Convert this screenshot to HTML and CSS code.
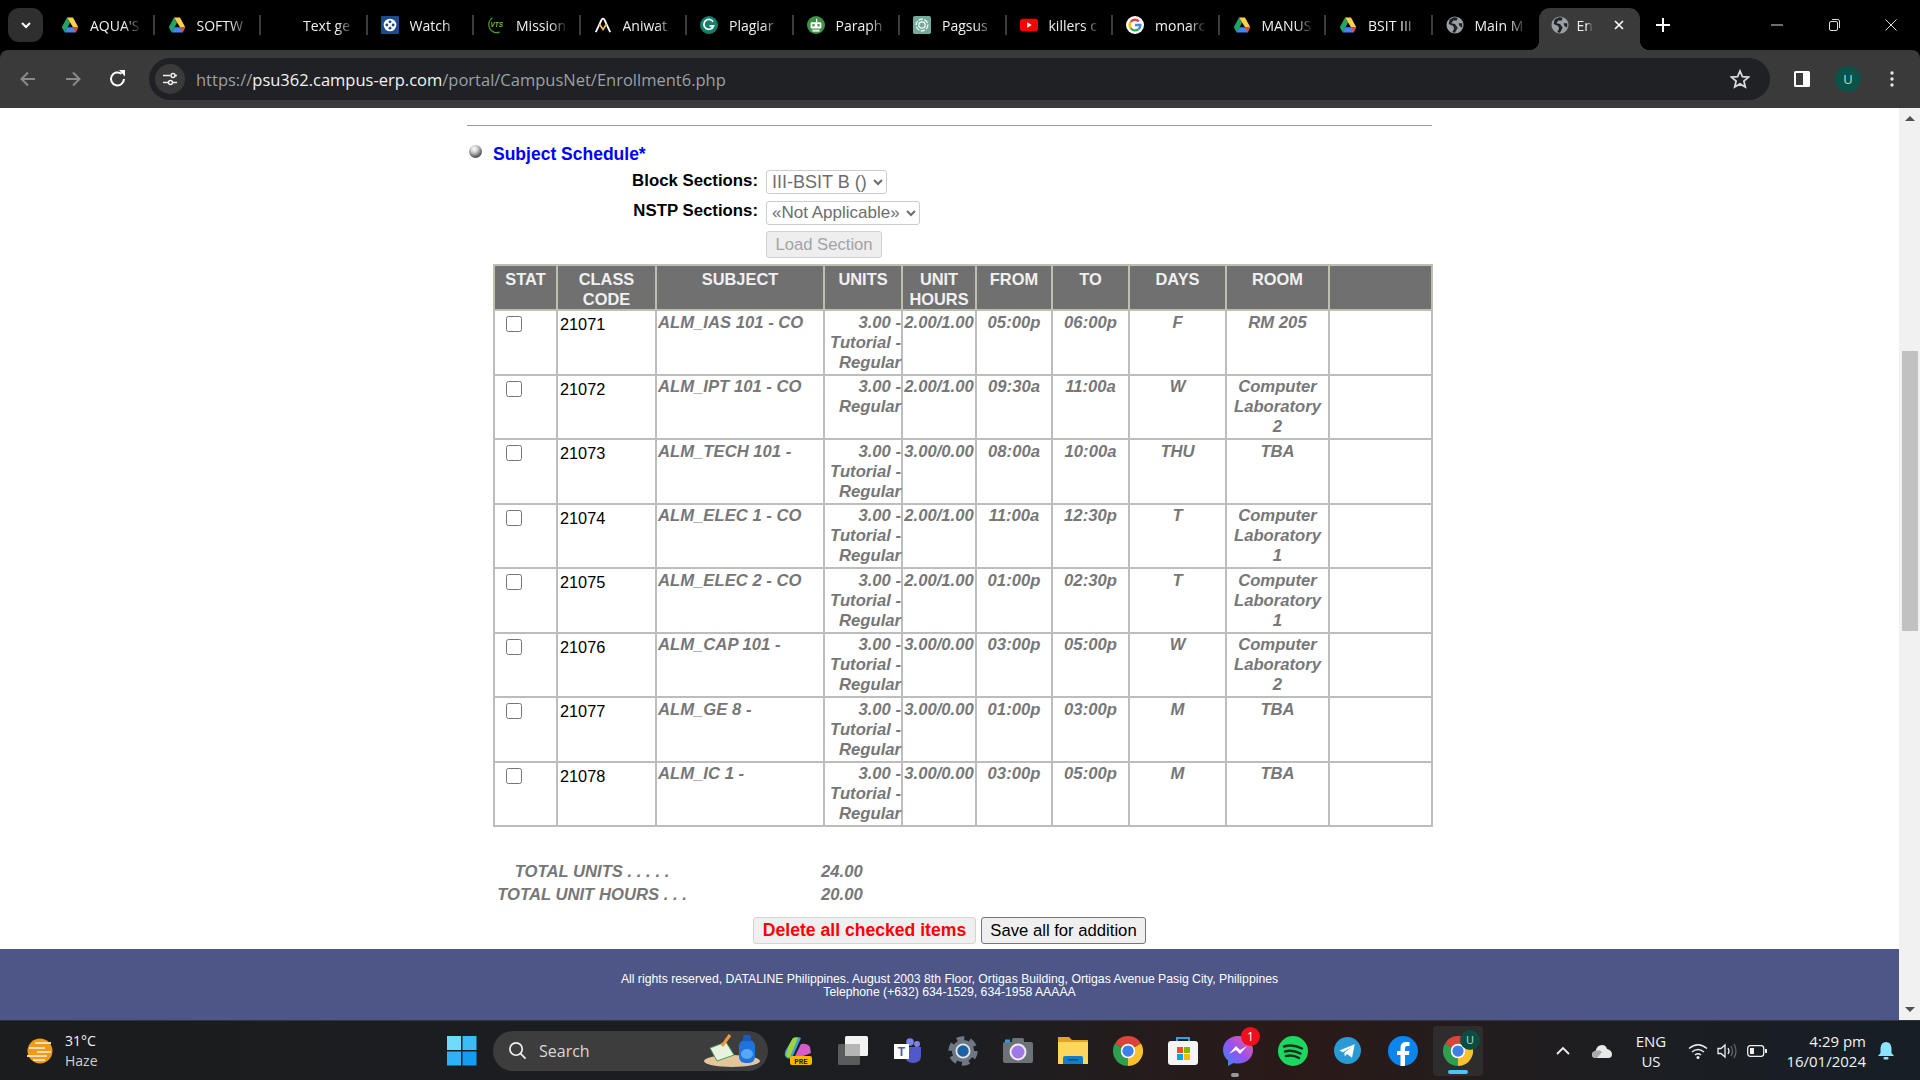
FILE: index.html
```html
<!DOCTYPE html>
<html lang="en">
<head>
	<meta charset="UTF-8">
	<title>Enrollment</title>
	<link rel="stylesheet" href="styles.css">
</head>
<body>
	<svg class="defs" width="0" height="0">
		<symbol id="drive" viewBox="0 0 24 22">
			<polygon points="8,1 12,8 5,21 1,14" fill="#1fa463"/>
			<polygon points="8,1 16,1 23,14 16,14" fill="#ffd04b"/>
			<polygon points="5,21 8.5,14 23,14 19.5,21" fill="#4285f4"/>
			<polygon points="16,14 23,14 19.5,21" fill="#ea4335"/>
		</symbol>
		<symbol id="reel" viewBox="0 0 20 20">
			<rect width="20" height="20" rx="1" fill="#1d4a8f"/>
			<circle cx="10" cy="10" r="7" fill="#fff"/>
			<circle cx="10" cy="6.5" r="1.6" fill="#1d4a8f"/>
			<circle cx="10" cy="13.5" r="1.6" fill="#1d4a8f"/>
			<circle cx="6.5" cy="10" r="1.6" fill="#1d4a8f"/>
			<circle cx="13.5" cy="10" r="1.6" fill="#1d4a8f"/>
		</symbol>
		<symbol id="ani" viewBox="0 0 20 20">
			<path d="M2 18L8 5Q10 1 12 5L18 18" fill="none" stroke="#fff" stroke-width="2"/>
			<path d="M6 9L10 15L14 9" fill="none" stroke="#e6b765" stroke-width="2"/>
		</symbol>
		<symbol id="gram" viewBox="0 0 20 20">
			<circle cx="10" cy="10" r="10" fill="#11806a"/>
			<path d="M14.500 6.500A5.500 5.500 0 1 0 15 11H10.500" fill="none" stroke="#fff" stroke-width="2"/>
		</symbol>
		<symbol id="robot" viewBox="0 0 20 20">
			<circle cx="10" cy="10" r="10" fill="#3f9149"/>
			<rect x="4" y="7" width="12" height="7" rx="1.500" fill="#fff"/>
			<rect x="6" y="9" width="2.500" height="2.500" fill="#3f9149"/>
			<rect x="11.500" y="9" width="2.500" height="2.500" fill="#3f9149"/>
			<rect x="6" y="15" width="8" height="2.500" fill="#d9ead9"/>
			<rect x="10" y="3" width="1.400" height="4" fill="#fff"/>
		</symbol>
		<symbol id="gpt" viewBox="0 0 20 20">
			<rect width="20" height="20" rx="2" fill="#74aa9c"/>
			<circle cx="10" cy="10" r="6.500" fill="none" stroke="#fff" stroke-width="1.300" stroke-dasharray="5 1.500"/>
			<circle cx="10" cy="10" r="3.500" fill="none" stroke="#fff" stroke-width="1.300"/>
		</symbol>
		<symbol id="yt" viewBox="0 0 20 14">
			<rect width="20" height="14" rx="3.500" fill="#f00"/>
			<polygon points="8,4 13,7 8,10" fill="#fff"/>
		</symbol>
		<symbol id="goog" viewBox="0 0 20 20">
			<circle cx="10" cy="10" r="10" fill="#fff"/>
			<path d="M14.200 6A6 6 0 0 0 5.200 6.500" fill="none" stroke="#ea4335" stroke-width="2.600"/>
			<path d="M5.200 6.500A6 6 0 0 0 5.200 13.500" fill="none" stroke="#fbbc05" stroke-width="2.600"/>
			<path d="M5.200 13.500A6 6 0 0 0 14 14.500" fill="none" stroke="#34a853" stroke-width="2.600"/>
			<path d="M14 14.500A6 6 0 0 0 16 10H10" fill="none" stroke="#4285f4" stroke-width="2.600"/>
		</symbol>
		<symbol id="globe" viewBox="0 0 20 20">
			<circle cx="10" cy="10" r="9.500" fill="#9aa0a6"/>
			<path d="M9 1.500L4 4L3 9L8 11L9 14L7 18L10 18.500L13 13L10 9L6 8L8 5L12 5L13 2Z" fill="#202124"/>
			<path d="M14 8L18 8L18 13L15 11Z" fill="#202124"/>
		</symbol>
		<symbol id="chrome" viewBox="0 0 24 24">
			<path d="M12 12L1.600 6A12 12 0 0 1 22.400 6Z" fill="#db4437"/>
			<path d="M12 12L22.400 6A12 12 0 0 1 12 24Z" fill="#fbc02d"/>
			<path d="M12 12L12 24A12 12 0 0 1 1.600 6Z" fill="#2e9e4f"/>
			<circle cx="12" cy="12" r="5.800" fill="#fff"/>
			<circle cx="12" cy="12" r="4.500" fill="#3f7fe8"/>
		</symbol>
	</svg>

	<div class="tabstrip">
		<div class="tab_menu">
			<svg class="ico_12" viewBox="0 0 12 12"><path d="M2 4L6 8L10 4" fill="none" stroke="#fff" stroke-width="2"/></svg>
		</div>
		<div class="tab"><svg class="favicon"><use href="#drive"/></svg><span class="tab_title">AQUA'S</span></div>
		<div class="tab"><svg class="favicon"><use href="#drive"/></svg><span class="tab_title">SOFTW</span></div>
		<div class="tab"><span class="favicon"></span><span class="tab_title">Text ge</span></div>
		<div class="tab"><svg class="favicon"><use href="#reel"/></svg><span class="tab_title">Watch</span></div>
		<div class="tab">
			<svg class="favicon" viewBox="0 0 20 20">
				<path d="M6 2A9 9 0 0 0 14 18" fill="none" stroke="#4f9a22" stroke-width="1.400"/>
				<text x="4" y="12.500" class="vts_text">VTS</text>
			</svg>
			<span class="tab_title">Mission</span>
		</div>
		<div class="tab"><svg class="favicon"><use href="#ani"/></svg><span class="tab_title">Aniwat</span></div>
		<div class="tab"><svg class="favicon"><use href="#gram"/></svg><span class="tab_title">Plagiar</span></div>
		<div class="tab"><svg class="favicon"><use href="#robot"/></svg><span class="tab_title">Paraph</span></div>
		<div class="tab"><svg class="favicon"><use href="#gpt"/></svg><span class="tab_title">Pagsus</span></div>
		<div class="tab"><svg class="favicon"><use href="#yt"/></svg><span class="tab_title">killers c</span></div>
		<div class="tab"><svg class="favicon"><use href="#goog"/></svg><span class="tab_title">monarc</span></div>
		<div class="tab"><svg class="favicon"><use href="#drive"/></svg><span class="tab_title">MANUS</span></div>
		<div class="tab"><svg class="favicon"><use href="#drive"/></svg><span class="tab_title">BSIT III</span></div>
		<div class="tab tab_last"><svg class="favicon"><use href="#globe"/></svg><span class="tab_title">Main M</span></div>
		<div class="tab_active">
			<svg class="favicon"><use href="#globe"/></svg>
			<span class="tab_title_short">En</span>
			<svg class="ico_12" viewBox="0 0 12 12"><path d="M2 2L10 10M10 2L2 10" stroke="#fff" stroke-width="1.600"/></svg>
		</div>
		<svg class="tab_plus" viewBox="0 0 14 14"><path d="M7 0V14M0 7H14" stroke="#fff" stroke-width="2"/></svg>
		<div class="win_controls">
			<svg class="ico_12" viewBox="0 0 12 12"><path d="M0 6H12" stroke="#ddd" stroke-width="1"/></svg>
			<svg class="ico_12" viewBox="0 0 12 12"><rect x="1.500" y="2.500" width="8" height="9" rx="1.500" fill="none" stroke="#ddd"/><path d="M4 0.500H9A2 2 0 0 1 11.500 3V9" fill="none" stroke="#ddd"/></svg>
			<svg class="ico_12" viewBox="0 0 12 12"><path d="M0.500 0.500L11.500 11.500M11.500 0.500L0.500 11.500" stroke="#ddd"/></svg>
		</div>
	</div>

	<div class="toolbar">
		<svg class="nav_btn" viewBox="0 0 20 20"><path d="M17 10H4M10 3.500L3.500 10L10 16.500" fill="none" stroke="#8a8a8a" stroke-width="2"/></svg>
		<svg class="nav_btn" viewBox="0 0 20 20"><path d="M3 10H16M10 3.500L16.500 10L10 16.500" fill="none" stroke="#8a8a8a" stroke-width="2"/></svg>
		<svg class="nav_btn" viewBox="0 0 20 20"><path d="M16 10A6.500 6.500 0 1 1 13.500 4.800" fill="none" stroke="#fff" stroke-width="2"/><polygon points="11,1 17,1 17,7.500" fill="#fff"/></svg>
		<div class="address">
			<div class="site_info">
				<svg class="ico_16" viewBox="0 0 16 16"><path d="M1 4.500H8M1 11.500H6M13 4.500H15M11 11.500H15" stroke="#eee" stroke-width="1.600"/><circle cx="11" cy="4.500" r="2" fill="none" stroke="#eee" stroke-width="1.500"/><circle cx="8.500" cy="11.500" r="2" fill="none" stroke="#eee" stroke-width="1.500"/></svg>
			</div>
			<span class="url">https://<b>psu362.campus-erp.com</b>/portal/CampusNet/Enrollment6.php</span>
			<svg class="star" viewBox="0 0 20 20"><polygon points="10,2 12.400,7.600 18.500,8.100 13.900,12.100 15.300,18 10,14.900 4.700,18 6.100,12.100 1.500,8.100 7.600,7.600" fill="none" stroke="#d8d8d8" stroke-width="1.800"/></svg>
		</div>
		<svg class="side_panel" viewBox="0 0 18 18"><rect x="1" y="1" width="16" height="16" rx="1.500" fill="#fff"/><rect x="3" y="3" width="7" height="12" fill="#3a3a3a"/></svg>
		<div class="avatar">U</div>
		<svg class="kebab" viewBox="0 0 4 18"><circle cx="2" cy="3" r="1.700" fill="#e8e8e8"/><circle cx="2" cy="9" r="1.700" fill="#e8e8e8"/><circle cx="2" cy="15" r="1.700" fill="#e8e8e8"/></svg>
	</div>

	<div class="viewport">
		<div class="page">
			<div class="content">
				<div class="rule"></div>
				<div class="section_head">
					<span class="ball"></span>
					<span class="section_title">Subject Schedule*</span>
				</div>
				<div class="form_grid">
					<label class="form_label">Block Sections:</label>
					<select class="sel sel_block"><option>III-BSIT B ()</option></select>
					<label class="form_label">NSTP Sections:</label>
					<select class="sel sel_nstp"><option>«Not Applicable»</option></select>
					<span></span>
					<button class="btn_load" disabled>Load Section</button>
				</div>

				<table class="sched">
					<colgroup>
						<col class="c_stat"><col class="c_code"><col class="c_subj"><col class="c_units"><col class="c_hours">
						<col class="c_from"><col class="c_to"><col class="c_days"><col class="c_room"><col class="c_blank">
					</colgroup>
					<tr class="head">
						<th>STAT</th><th>CLASS<br>CODE</th><th>SUBJECT</th><th>UNITS</th><th>UNIT<br>HOURS</th>
						<th>FROM</th><th>TO</th><th>DAYS</th><th>ROOM</th><th></th>
					</tr>
					<tr>
						<td class="stat"><input type="checkbox"></td><td class="code">21071</td><td class="subj">ALM_IAS 101 - CO</td>
						<td class="units">3.00 -<br>Tutorial -<br>Regular</td><td class="hours">2.00/1.00</td>
						<td>05:00p</td><td>06:00p</td><td>F</td><td>RM 205</td><td></td>
					</tr>
					<tr>
						<td class="stat"><input type="checkbox"></td><td class="code">21072</td><td class="subj">ALM_IPT 101 - CO</td>
						<td class="units">3.00 -<br>Regular</td><td class="hours">2.00/1.00</td>
						<td>09:30a</td><td>11:00a</td><td>W</td><td>Computer<br>Laboratory<br>2</td><td></td>
					</tr>
					<tr>
						<td class="stat"><input type="checkbox"></td><td class="code">21073</td><td class="subj">ALM_TECH 101 -</td>
						<td class="units">3.00 -<br>Tutorial -<br>Regular</td><td class="hours">3.00/0.00</td>
						<td>08:00a</td><td>10:00a</td><td>THU</td><td>TBA</td><td></td>
					</tr>
					<tr>
						<td class="stat"><input type="checkbox"></td><td class="code">21074</td><td class="subj">ALM_ELEC 1 - CO</td>
						<td class="units">3.00 -<br>Tutorial -<br>Regular</td><td class="hours">2.00/1.00</td>
						<td>11:00a</td><td>12:30p</td><td>T</td><td>Computer<br>Laboratory<br>1</td><td></td>
					</tr>
					<tr>
						<td class="stat"><input type="checkbox"></td><td class="code">21075</td><td class="subj">ALM_ELEC 2 - CO</td>
						<td class="units">3.00 -<br>Tutorial -<br>Regular</td><td class="hours">2.00/1.00</td>
						<td>01:00p</td><td>02:30p</td><td>T</td><td>Computer<br>Laboratory<br>1</td><td></td>
					</tr>
					<tr>
						<td class="stat"><input type="checkbox"></td><td class="code">21076</td><td class="subj">ALM_CAP 101 -</td>
						<td class="units">3.00 -<br>Tutorial -<br>Regular</td><td class="hours">3.00/0.00</td>
						<td>03:00p</td><td>05:00p</td><td>W</td><td>Computer<br>Laboratory<br>2</td><td></td>
					</tr>
					<tr>
						<td class="stat"><input type="checkbox"></td><td class="code">21077</td><td class="subj">ALM_GE 8 -</td>
						<td class="units">3.00 -<br>Tutorial -<br>Regular</td><td class="hours">3.00/0.00</td>
						<td>01:00p</td><td>03:00p</td><td>M</td><td>TBA</td><td></td>
					</tr>
					<tr>
						<td class="stat"><input type="checkbox"></td><td class="code">21078</td><td class="subj">ALM_IC 1 -</td>
						<td class="units">3.00 -<br>Tutorial -<br>Regular</td><td class="hours">3.00/0.00</td>
						<td>03:00p</td><td>05:00p</td><td>M</td><td>TBA</td><td></td>
					</tr>
				</table>

				<div class="totals">
					<span class="total_name">TOTAL UNITS . . . . .</span><span>24.00</span>
					<span class="total_name">TOTAL UNIT HOURS . . .</span><span>20.00</span>
				</div>
				<div class="actions">
					<button class="btn_delete">Delete all checked items</button>
					<button class="btn_save">Save all for addition</button>
				</div>
			</div>
			<div class="footer">
				All rights reserved, DATALINE Philippines. August 2003 8th Floor, Ortigas Building, Ortigas Avenue Pasig City, Philippines<br>
				Telephone (+632) 634-1529, 634-1958 AAAAA
			</div>
		</div>
		<div class="scrollbar">
			<div class="sb_btn"><span class="sb_up"></span></div>
			<div class="sb_thumb"></div>
			<div class="sb_btn sb_bottom"><span class="sb_down"></span></div>
		</div>
	</div>

	<div class="taskbar">
		<div class="weather">
			<svg class="weather_icon" viewBox="0 0 30 30">
				<circle cx="15" cy="15" r="12.500" fill="#f49a12"/>
				<path d="M10 7H26M4 12H20M12 16H26M2 20H22M8 24H20" stroke="#eeddb8" stroke-width="2"/>
			</svg>
			<div class="weather_text"><span>31°C</span><span class="haze">Haze</span></div>
		</div>
		<svg class="start" viewBox="0 0 30 30">
			<rect width="14" height="14" fill="#6fdcff"/><rect x="15.500" width="14" height="14" fill="#3bbcf5"/>
			<rect y="15.500" width="14" height="14" fill="#2cb3f5"/><rect x="15.500" y="15.500" width="14" height="14" fill="#129df0"/>
		</svg>
		<div class="search">
			<svg class="search_icon" viewBox="0 0 20 20"><circle cx="8.500" cy="8.500" r="6.500" fill="none" stroke="#eee" stroke-width="1.800"/><path d="M13 13L18.500 18.500" stroke="#eee" stroke-width="1.800"/></svg>
			<span class="search_text">Search</span>
			<svg class="search_art" viewBox="0 0 60 34">
				<ellipse cx="30" cy="27" rx="28" ry="6" fill="#e3c79a"/>
				<polygon points="8,14 24,8 32,21 15,27" fill="#e8f3df" stroke="#4c9c5a"/>
				<path d="M20 12L28 1" stroke="#f09a3e" stroke-width="3"/>
				<rect x="37" y="6" width="16" height="23" rx="6" fill="#1f73e0"/>
				<rect x="41" y="1" width="8" height="6" rx="2" fill="#185bb8"/>
				<ellipse cx="45" cy="20" rx="6" ry="5" fill="#5aa8f5"/>
			</svg>
		</div>
		<div class="apps">
			<div class="app">
				<svg class="app_icon" viewBox="0 0 30 30">
					<path d="M10 2Q14 0 18 2L9 22Q4 24 2 20Q1 16 4 12Z" fill="#3d9fe0"/>
					<path d="M10 2Q13 1 15 2L7 21Q4 22 3 19Q4 12 10 2Z" fill="#9ed33c"/>
					<path d="M18 8Q24 7 27 11L28 17L10 24Z" fill="#d85cc8"/>
					<rect x="7" y="20" width="22" height="9" rx="2" fill="#f9b800"/>
					<text x="18" y="27.500" class="pre_text">PRE</text>
				</svg>
			</div>
			<div class="app">
				<svg class="app_icon" viewBox="0 0 30 30">
					<rect x="0" y="8" width="22" height="21" rx="1.500" fill="#5b5b5b"/>
					<rect x="7" y="0" width="23" height="20" rx="1.500" fill="#f2f2f2"/>
					<rect x="7" y="8" width="15" height="12" fill="#b5b5b5"/>
				</svg>
			</div>
			<div class="app">
				<svg class="app_icon" viewBox="0 0 30 30">
					<circle cx="24" cy="8" r="3" fill="#7b83eb"/><circle cx="17" cy="6" r="3.800" fill="#7b83eb"/>
					<path d="M12 11H28V20Q28 27 20 27Q12 27 12 19Z" fill="#5059c9"/>
					<rect x="1" y="8" width="15" height="15" fill="#fff"/>
					<text x="8.500" y="20" class="teams_text">T</text>
				</svg>
			</div>
			<div class="app">
				<svg class="app_icon" viewBox="0 0 30 30">
					<circle cx="15" cy="15" r="11" fill="#6d7882"/>
					<circle cx="15" cy="15" r="12.500" fill="none" stroke="#6d7882" stroke-width="4.500" stroke-dasharray="7.500 5.590"/>
					<circle cx="15" cy="15" r="7.500" fill="#e6e6e6"/>
					<circle cx="15" cy="15" r="5.700" fill="#1a62a8"/>
				</svg>
			</div>
			<div class="app">
				<svg class="app_icon" viewBox="0 0 30 30">
					<rect x="0" y="6" width="30" height="21" rx="2" fill="#6d7278"/>
					<rect x="9" y="2" width="12" height="6" rx="1.500" fill="#6d7278"/>
					<rect x="2" y="3.500" width="5" height="3" fill="#2e9ad6"/>
					<circle cx="15" cy="16" r="8.500" fill="#eee"/>
					<circle cx="15" cy="16" r="6.500" fill="#a079e8"/>
				</svg>
			</div>
			<div class="app">
				<svg class="app_icon" viewBox="0 0 30 30">
					<path d="M0 1H11L14 4H30V28H0Z" fill="#e0a421"/>
					<rect x="0" y="6" width="30" height="22" fill="#fcd75c"/>
					<path d="M5 28V22Q5 20 7 20H23Q25 20 25 22V28Z" fill="#0f7fcb"/>
					<rect x="10" y="23" width="10" height="1.500" fill="#0a4e86"/>
				</svg>
			</div>
			<div class="app"><svg class="app_icon"><use href="#chrome"/></svg></div>
			<div class="app">
				<svg class="app_icon" viewBox="0 0 30 30">
					<path d="M9 7V2H21V7" fill="none" stroke="#25a8e0" stroke-width="2"/>
					<rect x="0" y="5" width="30" height="24" rx="3" fill="#f5f5f5"/>
					<rect x="9" y="11" width="6" height="6" fill="#f25022"/><rect x="16" y="11" width="6" height="6" fill="#7fba00"/>
					<rect x="9" y="18" width="6" height="6" fill="#00a4ef"/><rect x="16" y="18" width="6" height="6" fill="#ffb900"/>
				</svg>
			</div>
			<div class="app">
				<svg class="app_icon" viewBox="0 0 30 30">
					<defs><linearGradient id="msgr" x1="0" y1="1" x2="1" y2="0"><stop offset="0" stop-color="#2b8bf5"/><stop offset=".5" stop-color="#9b50f0"/><stop offset="1" stop-color="#f5608a"/></linearGradient></defs>
					<path d="M15 0C6 0 0 6.500 0 14C0 18.500 2 22 5 24.500V30L10.500 27Q12.500 27.500 15 27.500C24 27.500 30 21.500 30 14C30 6.500 24 0 15 0Z" fill="url(#msgr)"/>
					<path d="M6 18L13 10L17 14L24 10L17 18L13 14Z" fill="#fff"/>
				</svg>
				<span class="badge">1</span>
				<span class="run_dot"></span>
			</div>
			<div class="app">
				<svg class="app_icon" viewBox="0 0 30 30">
					<circle cx="15" cy="15" r="15" fill="#1ed760"/>
					<path d="M6 10.500Q15 8 24 12.500M7 15.500Q15 13.500 22.500 17.500M8 20Q15 18.500 21 22" fill="none" stroke="#18301f" stroke-width="2.500" stroke-linecap="round"/>
				</svg>
			</div>
			<div class="app">
				<svg class="app_icon app_tele" viewBox="0 0 30 30">
					<circle cx="15" cy="15" r="15" fill="#2a9ad6"/>
					<path d="M6 15L23 8L20 23L14.500 19L12 21.500L11.500 17.500L19.500 11L10 17Z" fill="#fff"/>
				</svg>
			</div>
			<div class="app">
				<svg class="app_icon" viewBox="0 0 30 30">
					<circle cx="15" cy="15" r="15" fill="#0c85ee"/>
					<path d="M12.500 30V19H9V15H12.500V11.500Q12.500 6 18 6H21.500V10H19Q17 10 17 12V15H21.500L20.800 19H17V30Z" fill="#fff"/>
				</svg>
			</div>
			<div class="app app_active">
				<svg class="app_icon"><use href="#chrome"/></svg>
				<span class="chrome_badge">U</span>
				<span class="run_bar"></span>
			</div>
		</div>
		<div class="tray">
			<svg class="chevron" viewBox="0 0 16 10"><path d="M2 8L8 2L14 8" fill="none" stroke="#eee" stroke-width="1.800"/></svg>
			<svg class="cloud" viewBox="0 0 20 14"><path d="M4 14Q0 14 0 10.500Q0 7.500 3.500 7Q5 1 10 1Q14 1 15 5Q20 6 20 10.500Q20 14 16 14Z" fill="#e8e8e8"/><path d="M4 14Q0 14 0 10.500Q0 7.500 3.500 7Q7 5 10 8L5 14Z" fill="#aaa"/></svg>
			<div class="lang"><span>ENG</span><span>US</span></div>
			<svg class="wifi" viewBox="0 0 20 16"><path d="M1 5.500Q10 -2 19 5.500M4 9Q10 4 16 9M7 12Q10 9.500 13 12" fill="none" stroke="#eee" stroke-width="1.500"/><circle cx="10" cy="14.500" r="1.500" fill="#eee"/></svg>
			<svg class="speaker" viewBox="0 0 20 16"><path d="M1 5.500H4L8 2V14L4 10.500H1Z" fill="none" stroke="#eee" stroke-width="1.300"/><path d="M11 5Q13 8 11 11" fill="none" stroke="#eee" stroke-width="1.300"/><path d="M14 3Q17 8 14 13M17 1Q21 8 17 15" fill="none" stroke="#666" stroke-width="1.300"/></svg>
			<svg class="battery" viewBox="0 0 20 12"><rect x="0.700" y="0.700" width="16" height="10.600" rx="2.500" fill="none" stroke="#eee" stroke-width="1.300"/><rect x="3" y="3" width="4" height="6" fill="#eee"/><rect x="18" y="4" width="2" height="4" fill="#eee"/></svg>
			<div class="clock"><span>4:29 pm</span><span>16/01/2024</span></div>
			<svg class="bell" viewBox="0 0 16 18"><path d="M8 0Q13 0 13.500 6V11L16 14H0L2.500 11V6Q3 0 8 0Z" fill="#8be3ff"/><rect x="5.500" y="15" width="5" height="2.500" rx="1" fill="#8be3ff"/></svg>
		</div>
	</div>
</body>
</html>
```

FILE: styles.css
```css
*{
	box-sizing:border-box;
}

body{
	margin:0;
	width:1920px;
	height:1080px;
	overflow:hidden;
	display:flex;
	flex-direction:column;
	font-family:"Liberation Sans",Arial,sans-serif;
	background-color:#000;
}

.defs{
	position:absolute;
}

.vts_text{
	font:italic bold 7px "Liberation Sans",sans-serif;
	fill:#7fbf3f;
}

.pre_text{
	font:bold 7.500px "Liberation Mono",monospace;
	fill:#222;
	text-anchor:middle;
}

.teams_text{
	font:bold 12px "Liberation Sans",sans-serif;
	fill:#4b53bc;
	text-anchor:middle;
}

.ico_12{
	width:12px;
	height:12px;
	flex:none;
}

.ico_16{
	width:16px;
	height:16px;
}

/* tab strip */
.tabstrip{
	height:50px;
	flex:none;
	display:flex;
	align-items:flex-start;
	background-color:#000;
	font-family:"Open Sans",sans-serif;
	font-size:14px;
	color:#f0f0f0;
}

.tab_menu{
	width:35px;
	height:34px;
	margin:8px 5px 0 8px;
	border-radius:11px;
	background-color:#2f2f2f;
	display:flex;
	align-items:center;
	justify-content:center;
}

.tab{
	width:106.500px;
	height:20px;
	margin-top:15px;
	padding-left:13px;
	display:flex;
	align-items:center;
	gap:11px;
	border-right:2px solid #3c3c3c;
	flex:none;
}

.tab_last{
	border-right:none;
	width:106px;
}

.favicon{
	width:18px;
	height:18px;
	flex:none;
}

.tab_title{
	width:52px;
	overflow:hidden;
	white-space:nowrap;
	-webkit-mask-image:linear-gradient(to right,#000 65%,transparent);
	mask-image:linear-gradient(to right,#000 65%,transparent);
}

.tab_title_short{
	margin-left:8px;
	white-space:nowrap;
	-webkit-mask-image:linear-gradient(to right,#000 60%,transparent);
	mask-image:linear-gradient(to right,#000 60%,transparent);
}

.tab_active{
	position:relative;
	width:101px;
	height:42px;
	margin-top:8px;
	padding:0 15px 8px 12px;
	display:flex;
	align-items:center;
	background-color:#3a3a3a;
	border-radius:11px 11px 0 0;
	flex:none;
}

.tab_active::before,.tab_active::after{
	content:"";
	position:absolute;
	bottom:0;
	width:10px;
	height:10px;
}

.tab_active::before{
	left:-10px;
	background:radial-gradient(circle at 0 0,#000 10px,#3a3a3a 10.500px);
}

.tab_active::after{
	right:-10px;
	background:radial-gradient(circle at 100% 0,#000 10px,#3a3a3a 10.500px);
}

.tab_active .ico_12{
	margin-left:auto;
}

.tab_plus{
	width:14px;
	height:14px;
	margin:18px 0 0 16px;
	flex:none;
}

.win_controls{
	margin:19px 23px 0 auto;
	display:flex;
	gap:45px;
}

/* toolbar */
.toolbar{
	height:58px;
	flex:none;
	display:flex;
	align-items:center;
	background-color:#3a3a3a;
	border-radius:8px 8px 0 0;
	padding-left:18px;
}

.nav_btn{
	width:20px;
	height:20px;
	margin-right:25px;
	flex:none;
}

.nav_btn:nth-child(3){
	margin-right:21px;
}

.address{
	width:1621px;
	height:42px;
	display:flex;
	align-items:center;
	background-color:#202124;
	border-radius:21px;
	padding-left:6px;
	flex:none;
}

.site_info{
	width:30px;
	height:30px;
	border-radius:50%;
	background-color:#3a3a3a;
	display:flex;
	align-items:center;
	justify-content:center;
}

.url{
	margin-left:11px;
	font-family:"Open Sans",sans-serif;
	font-size:16.500px;
	color:#9aa0a6;
	white-space:nowrap;
}

.url b{
	font-weight:normal;
	color:#f1f3f4;
}

.star{
	width:20px;
	height:20px;
	margin-left:auto;
	margin-right:20px;
}

.side_panel{
	width:18px;
	height:18px;
	margin-left:23px;
	flex:none;
}

.avatar{
	width:26px;
	height:26px;
	margin-left:24px;
	border-radius:50%;
	background-color:#0b5348;
	color:#a8e0d0;
	font:13px "Open Sans",sans-serif;
	text-align:center;
	line-height:26px;
	flex:none;
}

.kebab{
	width:4px;
	height:18px;
	margin-left:29px;
	flex:none;
}

/* page */
.viewport{
	flex:1;
	display:flex;
	min-height:0;
	background-color:#fff;
}

.page{
	flex:1;
	display:flex;
	flex-direction:column;
}

.content{
	width:965px;
	margin:0 auto;
	padding-top:17px;
}

.rule{
	height:1px;
	background-color:#999;
}

.section_head{
	margin:18px 0 0 2px;
	display:flex;
	align-items:center;
	gap:11px;
	height:20px;
}

.ball{
	width:13px;
	height:13px;
	margin-top:-5px;
	border-radius:50%;
	background:radial-gradient(circle at 40% 30%,#fff 0,#ccc 30%,#555 70%,#222 100%);
}

.section_title{
	font-size:17.500px;
	font-weight:bold;
	color:#00f;
}

.form_grid{
	margin-top:6px;
	display:grid;
	grid-template-columns:291px 1fr;
	column-gap:8px;
	row-gap:6.500px;
	align-items:center;
	justify-items:start;
}

.form_label{
	justify-self:end;
	font-size:16.800px;
	font-weight:bold;
	color:#000;
	margin-top:-3px;
}

.sel{
	height:24px;
	padding:0 0 0 1px;
	border:1px solid #ccc;
	border-radius:3px;
	background-color:#fff;
	color:#6d6d6d;
	font-family:"Liberation Sans",sans-serif;
	font-size:17px;
}

.sel_block{
	width:121px;
	font-size:18px;
}

.sel_nstp{
	width:154px;
}

.btn_load{
	width:116px;
	height:27px;
	padding:0;
	border:1px solid #d0d0d0;
	border-radius:3px;
	background-color:#eee;
	color:#a3a3a3;
	font-family:"Liberation Sans",sans-serif;
	font-size:16.670px;
}

.sched{
	margin:6px 0 0 26px;
	width:940px;
	table-layout:fixed;
	border-collapse:collapse;
	font-size:16.670px;
	line-height:20px;
}

.c_stat{width:63px;}
.c_code{width:99px;}
.c_subj{width:168px;}
.c_units{width:78px;}
.c_hours{width:74px;}
.c_from{width:76px;}
.c_to{width:77px;}
.c_days{width:97px;}
.c_room{width:103px;}
.c_blank{width:103px;}

.sched tr{
	height:64.500px;
}

.sched .head{
	height:45px;
}

.sched th{
	padding:3px 1px 0;
	border:2px solid #bcc0ae;
	background-color:#707070;
	color:#f0f0f0;
	font-size:16.400px;
	font-weight:bold;
	text-align:center;
	vertical-align:top;
}

.sched td{
	padding:1.500px 1px 0;
	border:2px solid #bdbdbd;
	color:#777;
	font-weight:bold;
	font-style:italic;
	text-align:center;
	vertical-align:top;
	white-space:nowrap;
}

.sched .stat{
	padding:5px 0 0 11px;
	text-align:left;
}

.stat input{
	display:block;
	width:16px;
	height:16px;
	margin:0;
}

.sched .code{
	padding:3px 0 0 2px;
	color:#000;
	font-size:16.300px;
	font-weight:normal;
	font-style:normal;
	text-align:left;
}

.sched .subj{
	text-align:left;
}

.sched .units{
	text-align:right;
	padding-right:0;
}

.sched .hours{
	padding:1.500px 0 0;
}

.totals{
	margin:33px 0 0 25px;
	display:grid;
	grid-template-columns:200px auto;
	column-gap:129px;
	justify-content:start;
	font-size:16.670px;
	line-height:23px;
	font-weight:bold;
	font-style:italic;
	color:#777;
}

.total_name{
	text-align:center;
	white-space:nowrap;
}

.actions{
	margin-top:11px;
	display:flex;
	justify-content:center;
	gap:5px;
}

.actions button{
	height:27px;
	padding:0;
	border-radius:3px;
	background-color:#efefef;
	font-family:"Liberation Sans",sans-serif;
	font-size:16.670px;
}

.actions .btn_delete{
	width:223px;
	border:1px solid #d4d4d4;
	color:#f00;
	font-size:17.600px;
	font-weight:bold;
}

.btn_save{
	width:165px;
	border:1px solid #767676;
	color:#000;
}

.footer{
	margin-top:auto;
	height:71px;
	padding-top:24px;
	background-color:#4e5688;
	color:#fff;
	font-family:"Liberation Sans",sans-serif;
	font-size:12.230px;
	line-height:13px;
	text-align:center;
}

/* scrollbar */
.scrollbar{
	width:21px;
	flex:none;
	display:flex;
	flex-direction:column;
	background-color:#f1f1f1;
}

.sb_btn{
	height:21px;
	display:flex;
	align-items:center;
	justify-content:center;
	flex:none;
}

.sb_bottom{
	margin-top:auto;
}

.sb_up,.sb_down{
	width:0;
	height:0;
	border-left:5px solid transparent;
	border-right:5px solid transparent;
}

.sb_up{
	border-bottom:5px solid #505050;
}

.sb_down{
	border-top:5px solid #505050;
}

.sb_thumb{
	height:280px;
	margin:222px 2px 0 3px;
	background-color:#c1c1c1;
}

/* taskbar */
.taskbar{
	height:60px;
	flex:none;
	display:flex;
	align-items:center;
	background:linear-gradient(to right,#1b1c1e 0,#1d1e22 50%,#2a1a18 68%,#1c1e22 85%,#161e26 100%);
	border-top:1px solid #333;
	color:#f2f2f2;
	font-family:"Open Sans",sans-serif;
	font-size:14px;
}

.weather{
	width:447px;
	padding-left:25px;
	display:flex;
	align-items:center;
	gap:10px;
	flex:none;
}

.weather_icon{
	width:30px;
	height:30px;
}

.weather_text{
	display:flex;
	flex-direction:column;
	line-height:20px;
}

.haze{
	color:#d0d0d0;
}

.start{
	width:30px;
	height:30px;
	flex:none;
}

.search{
	width:275px;
	height:40px;
	margin-left:16px;
	padding-left:15px;
	display:flex;
	align-items:center;
	background-color:#3d3d3d;
	border-radius:20px;
	flex:none;
}

.search_icon{
	width:19px;
	height:19px;
}

.search_text{
	margin-left:12px;
	font-size:16px;
	color:#d8d8d8;
}

.search_art{
	width:60px;
	height:34px;
	margin-left:auto;
	margin-right:6px;
}

.apps{
	margin-left:2px;
	display:flex;
	flex:none;
}

.app{
	width:55px;
	height:50px;
	display:flex;
	align-items:center;
	justify-content:center;
	position:relative;
}

.app_icon{
	width:30px;
	height:30px;
}

.app_tele{
	width:27px;
	height:27px;
}

.app_active{
	background-color:#2e2c2c;
	border-radius:4px;
	width:50px;
	margin-left:3px;
}

.badge{
	position:absolute;
	top:1px;
	left:31px;
	width:19px;
	height:19px;
	border-radius:50%;
	background-color:#f0101c;
	color:#fff;
	font-size:12px;
	line-height:19px;
	text-align:center;
}

.run_dot{
	position:absolute;
	left:21px;
	bottom:-1px;
	width:8px;
	height:4px;
	border-radius:2px;
	background-color:#999;
}

.run_bar{
	position:absolute;
	left:15px;
	bottom:2px;
	width:20px;
	height:4px;
	border-radius:2px;
	background-color:#4cc2ff;
}

.chrome_badge{
	position:absolute;
	top:4px;
	left:27px;
	width:20px;
	height:20px;
	border-radius:50%;
	background-color:#0b4d42;
	color:#a8e0d0;
	font-size:11px;
	line-height:20px;
	text-align:center;
}

.tray{
	flex:1;
	display:flex;
	align-items:center;
	padding-left:72px;
	font-size:15px;
}

.chevron{
	width:16px;
	height:10px;
}

.cloud{
	width:20px;
	height:14px;
	margin-left:21px;
}

.lang{
	margin-left:22px;
	width:34px;
	display:flex;
	flex-direction:column;
	align-items:center;
	line-height:20px;
}

.wifi{
	width:20px;
	height:16px;
	margin-left:20px;
}

.speaker{
	width:20px;
	height:16px;
	margin-left:9px;
}

.battery{
	width:20px;
	height:12px;
	margin-left:10px;
}

.clock{
	width:88px;
	margin-left:11px;
	display:flex;
	flex-direction:column;
	align-items:flex-end;
	line-height:20px;
}

.bell{
	width:16px;
	height:18px;
	margin-left:12px;
}
```
